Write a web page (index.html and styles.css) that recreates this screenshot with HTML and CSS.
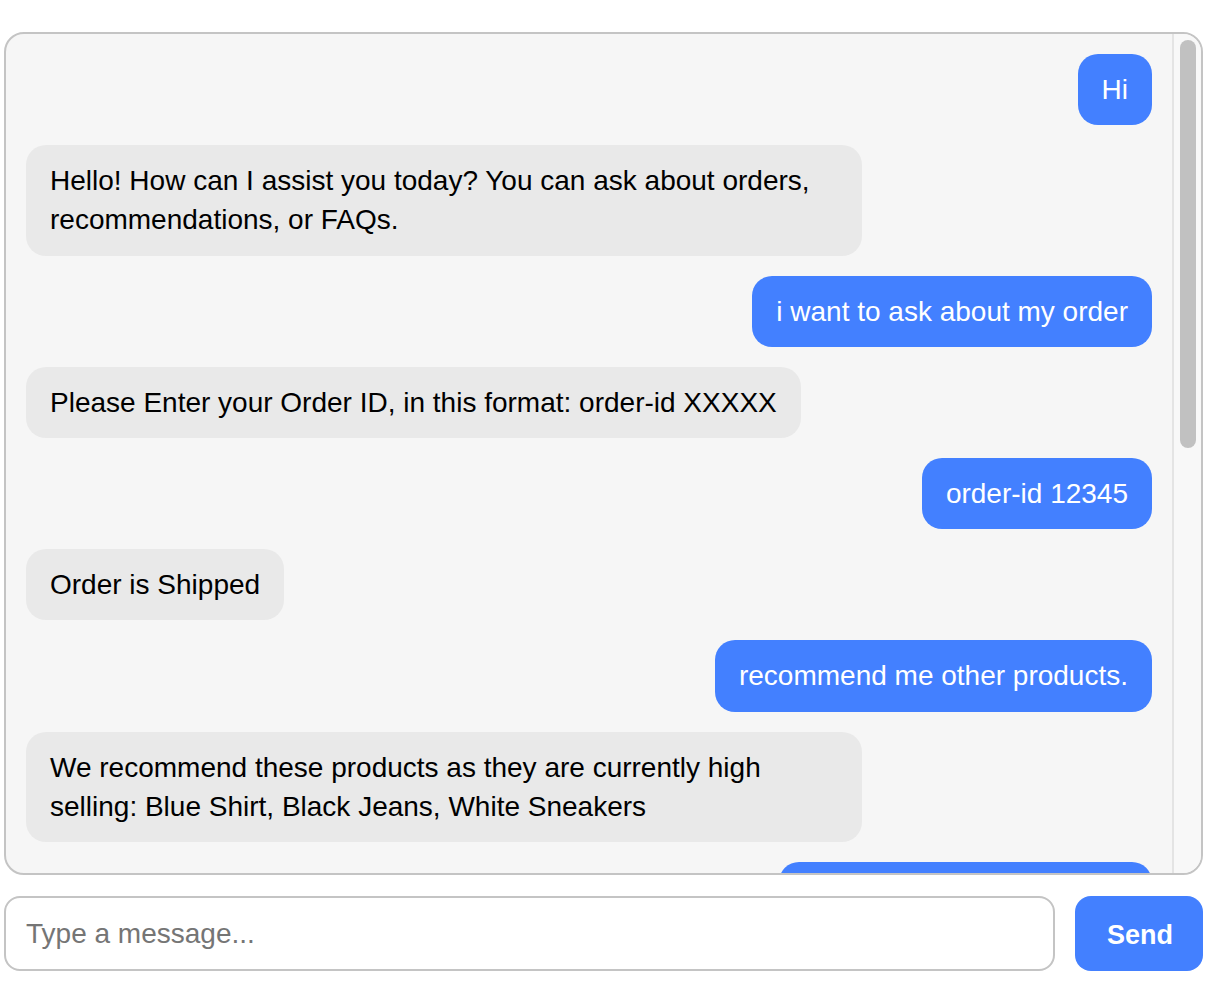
FILE: index.html
```html
<!DOCTYPE html>
<html lang="en">
<head>
<meta charset="utf-8">
<title>Chat</title>
<link rel="stylesheet" href="styles.css">
</head>
<body>
<div class="app">
  <div class="chat-box">
    <div class="messages">
      <div class="msg user">Hi</div>
      <div class="msg bot">Hello! How can I assist you today? You can ask about orders, recommendations, or FAQs.</div>
      <div class="msg user">i want to ask about my order</div>
      <div class="msg bot">Please Enter your Order ID, in this format: order-id XXXXX</div>
      <div class="msg user">order-id 12345</div>
      <div class="msg bot">Order is Shipped</div>
      <div class="msg user">recommend me other products.</div>
      <div class="msg bot">We recommend these products as they are currently high selling: Blue Shirt, Black Jeans, White Sneakers</div>
      <div class="msg user">what is your return policy?</div>
    </div>
    <div class="scroll-track">
      <div class="scroll-thumb"></div>
    </div>
  </div>
  <div class="composer">
    <input class="composer-input" type="text" placeholder="Type a message...">
    <button class="send-btn" type="button">Send</button>
  </div>
</div>
</body>
</html>
```

FILE: styles.css
```css
html, body {
  margin: 0;
  padding: 0;
  background: #ffffff;
}

body {
  font-family: "Liberation Sans", Arial, Helvetica, sans-serif;
  font-size: 28px;
  color: #000;
}

.app {
  width: 1199px;
  margin: 32px 0 0 4px;
  display: flex;
  flex-direction: column;
  gap: 21px;
}

.chat-box {
  height: 839px;
  border: 2px solid #c4c4c4;
  border-radius: 20px;
  background: #f6f6f6;
  overflow: hidden;
  display: flex;
}

.messages {
  flex: 1;
  min-width: 0;
  overflow: hidden;
  padding: 20px;
  box-sizing: border-box;
  display: flex;
  flex-direction: column;
  gap: 20px;
}

.scroll-track {
  width: 29px;
  flex-shrink: 0;
  background: #f8f8f8;
  border-left: 2px solid #e4e4e4;
  padding: 6px 5px 0 6px;
  box-sizing: border-box;
}

.scroll-thumb {
  height: 408px;
  border-radius: 8px;
  background: #c1c1c1;
}

.msg {
  max-width: 836px;
  box-sizing: border-box;
  padding: 16px 24px;
  border-radius: 20px;
  line-height: 1.4;
  flex-shrink: 0;
}

.msg.user {
  align-self: flex-end;
  background: #4380ff;
  color: #ffffff;
}

.msg.bot {
  align-self: flex-start;
  background: #e9e9e9;
  color: #000;
}

.composer {
  display: flex;
  gap: 20px;
  height: 75px;
}

.composer-input {
  flex: 1;
  min-width: 0;
  border: 2px solid #c4c4c4;
  border-radius: 16px;
  padding: 0 20px;
  font-family: "Liberation Sans", Arial, Helvetica, sans-serif;
  font-size: 28px;
  color: #000;
  background: #fff;
  outline: none;
}

.composer-input::placeholder {
  color: #757575;
}

.send-btn {
  width: 128px;
  border: none;
  border-radius: 16px;
  background: #4380ff;
  color: #fff;
  font-family: "Liberation Sans", Arial, Helvetica, sans-serif;
  font-size: 27px;
  font-weight: bold;
  padding: 4px 0 0 2px;
}
```
